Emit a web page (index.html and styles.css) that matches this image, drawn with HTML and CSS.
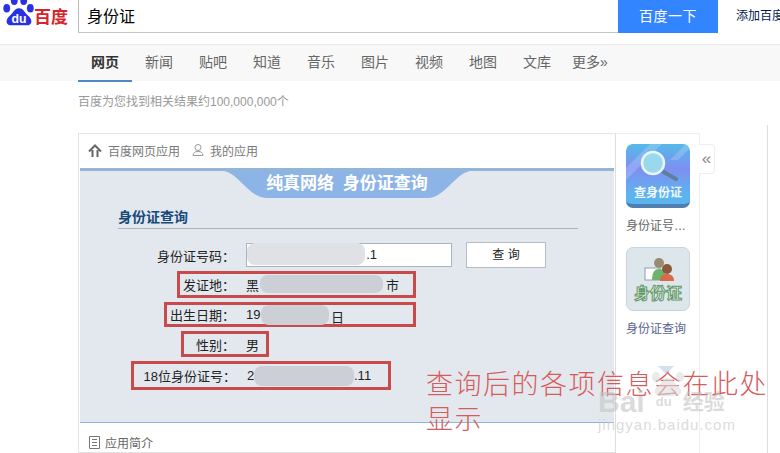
FILE: index.html
```html
<!DOCTYPE html>
<html lang="zh">

<head>
    <meta charset="utf-8">
    <title>身份证 百度搜索</title>
    <link rel="stylesheet" href="styles.css">
</head>

<body>
    <header class="topbar">
        <div class="logo">
            <svg class="paw" width="34" height="30" viewBox="0 0 36 30">
                <ellipse cx="5" cy="9" rx="3.600" ry="4.500" fill="#2932e1"/>
                <ellipse cx="13" cy="1" rx="3.600" ry="4.500" fill="#2932e1"/>
                <ellipse cx="23" cy="1" rx="3.600" ry="4.500" fill="#2932e1"/>
                <ellipse cx="30" cy="9" rx="3.600" ry="4.500" fill="#2932e1"/>
                <path d="M18 9c-5 0-6 5-10 8-4 3-5 10 2 10h16c7 0 6-7 2-10-4-3-5-8-10-8z" fill="#2932e1"/>
                <text x="18" y="25" class="du">du</text>
            </svg>
            <span class="logo-text">百度</span>
        </div>
        <div class="search">身份证</div>
        <div class="search-btn">百度一下</div>
        <div class="add-link">添加百度</div>
    </header>

    <nav class="tabs">
        <a class="valgt">网页</a>
        <a>新闻</a>
        <a>贴吧</a>
        <a>知道</a>
        <a>音乐</a>
        <a>图片</a>
        <a>视频</a>
        <a>地图</a>
        <a>文库</a>
        <a>更多»</a>
    </nav>

    <p class="count">百度为您找到相关结果约100,000,000个</p>

    <div class="result">
        <section class="card">
            <div class="crumbs">
                <svg width="14" height="13" viewBox="0 0 14 13" fill="none" stroke="#666" stroke-width="2"><path d="M1 7.500l6-6 6 6M4.500 6v7M9.500 6v7"/></svg>
                <span>百度网页应用</span>
                <svg class="user" width="12" height="12" viewBox="0 0 12 12" fill="none" stroke="#999"><circle cx="6" cy="3.500" r="3"/><path d="M1 11.500c0-3 2-4 5-4s5 1 5 4z"/></svg>
                <span>我的应用</span>
            </div>

            <div class="panel">
                <div class="banner">
                    <svg class="banner-bg" width="246" height="27" viewBox="0 0 246 27"><path d="M0 0C14 2 26 27 42 27H204C220 27 232 2 246 0z" fill="#8db4e6"/></svg>
                    <h1>纯真网络 身份证查询</h1>
                </div>
                <h2>身份证查询</h2>

                <div class="row row-query">
                    <span class="label">身份证号码：</span>
                    <span class="id-input">.1<i class="smudge smudge-a"></i></span>
                    <span class="query-btn">查 询</span>
                </div>
                <div class="row mark row-place">
                    <span class="label">发证地：</span>
                    <span class="value">黑<i class="smudge smudge-b"></i><b>市</b></span>
                </div>
                <div class="row mark row-birth">
                    <span class="label">出生日期：</span>
                    <span class="value">19<i class="smudge smudge-c"></i><b>日</b></span>
                </div>
                <div class="row mark row-sex">
                    <span class="label">性别：</span>
                    <span class="value">男</span>
                </div>
                <div class="row mark row-long">
                    <span class="label">18位身份证号：</span>
                    <span class="value">2<i class="smudge smudge-d"></i><b>.11</b></span>
                </div>
            </div>

            <div class="intro">
                <svg width="11" height="13" viewBox="0 0 11 13" fill="none" stroke="#777"><path d="M.5.500h10v12H.5zM3 3.500h5M3 6.500h5M3 9.500h5"/></svg>
                <span>应用简介</span>
            </div>
        </section>

        <aside class="apps">
            <div class="toggle">«</div>
            <div class="app">
                <div class="icon icon-search">
                    <svg width="64" height="44" viewBox="0 0 64 44">
                        <path d="M0 24L24 0h12L0 36zM44 16L60 0h4v4L52 16z" fill="#fff" opacity=".18"/>
                        <path d="M36 27l14 8" stroke="#5f7f9c" stroke-width="4" stroke-linecap="round"/>
                        <circle cx="27" cy="19" r="11" fill="#9ad8ee" stroke="#e8f6fb" stroke-width="2.500"/>
                    </svg>
                    <span>查身份证</span>
                </div>
                <p>身份证号…</p>
            </div>
            <div class="app">
                <div class="icon icon-card">
                    <svg width="62" height="36" viewBox="0 0 62 36">
                        <rect x="18" y="20" width="15" height="12" fill="#fff" stroke="#8aa0b0"/>
                        <circle cx="32" cy="15" r="5" fill="#9b8b6e"/>
                        <path d="M25 32c0-8 3-11 7-11s7 3 7 11z" fill="#6fb36a"/>
                        <circle cx="40" cy="21" r="5" fill="#8b5a3a"/>
                        <path d="M33 33c0-5 3-7 7-7s7 2 7 7z" fill="#d9694a"/>
                    </svg>
                    <span>身份证</span>
                </div>
                <p class="app-name">身份证查询</p>
            </div>
        </aside>
    </div>

    <div class="note">查询后的各项信息会在此处显示</div>
    <div class="watermark">
        <svg class="wm-paw" width="36" height="30" viewBox="0 0 36 30">
            <path d="M8 0h16l-8 8z" fill="#b9cbe6"/>
            <ellipse cx="6" cy="11" rx="4" ry="5" fill="#ddd"/>
            <ellipse cx="30" cy="11" rx="4" ry="5" fill="#ddd"/>
            <path d="M18 12c-5 0-6 5-10 8-4 3-5 10 2 10h16c7 0 6-7 2-10-4-3-5-8-10-8z" fill="#ddd"/>
        </svg>
        <span class="wm-main">Bai<i>du</i><em>经验</em></span>
        <span class="wm-url">jingyan.baidu.com</span>
    </div>
</body>

</html>
```
FILE: styles.css
```css
* {
    box-sizing: border-box;
    margin: 0;
    padding: 0;
}

html,
body {
    height: 453px;
    overflow: hidden;
}

body {
    position: relative;
    background: #fff;
    color: #222;
    font-family: "Liberation Sans", "Noto Sans CJK SC", sans-serif;
    font-size: 13px;
}

/* top search bar */
.topbar {
    display: flex;
    height: 33px;
}

.logo {
    display: flex;
    flex: none;
    width: 78px;
    align-items: flex-end;
    padding: 0 0 5px 2px;
    overflow: hidden;
}

.paw {
    flex: none;
    margin-bottom: -1px;
    overflow: visible;
}

.du {
    fill: #fff;
    font-size: 13px;
    font-weight: bold;
    text-anchor: middle;
}

.logo-text {
    margin-left: -2px;
    color: #d7232a;
    font-size: 17px;
    font-weight: bold;
    line-height: 20px;
}

.search {
    flex: none;
    width: 540px;
    border-left: 1px solid #bbb;
    border-bottom: 1px solid #c4c4c4;
    padding-left: 8px;
    color: #000;
    font-size: 16px;
    line-height: 33px;
}

.search-btn {
    flex: none;
    width: 100px;
    background: #3385ff;
    color: #fff;
    font-size: 14px;
    letter-spacing: .5px;
    line-height: 32px;
    text-align: center;
}

.add-link {
    flex: none;
    margin-left: 18px;
    color: #001a4d;
    font-size: 12px;
    line-height: 33px;
    white-space: nowrap;
}

/* tabs */
.tabs {
    display: flex;
    height: 37px;
    margin-top: 11px;
    border-top: 1px solid #e8e8e8;
    background: #f8f8f8;
    padding-left: 78px;
}

.tabs a {
    width: 54px;
    height: 37px;
    color: #666;
    font-size: 14px;
    line-height: 35px;
    text-align: center;
}

.tabs a:last-child {
    width: auto;
    margin-left: 8px;
}

.tabs .valgt {
    border-bottom: 2px solid #4e88c7;
    color: #333;
    font-weight: bold;
}

.count {
    margin: 12px 0 0 78px;
    color: #999;
    font-size: 12px;
    line-height: 18px;
}

/* result */
.result {
    display: flex;
    width: 690px;
    height: 328px;
    margin: 14px 0 0 78px;
    border-right: 1px solid #ddd;
    padding-top: 8px;
    align-items: flex-start;
}

.card {
    width: 538px;
    height: 320px;
    border: 1px solid #e4e4e4;
    border-right-color: #ddd;
}

.crumbs {
    display: flex;
    height: 34px;
    align-items: center;
    padding: 0 0 2px 9px;
    color: #777;
    font-size: 12px;
}

.crumbs span {
    margin-left: 6px;
}

.crumbs .user {
    margin-left: 12px;
}

.panel {
    height: 255px;
    margin: 0 1px;
    border-top: 3px solid #94b6d6;
    border-bottom: 1px solid #94b6d6;
    background: #e3e8ee;
    color: #222;
}

.banner {
    position: relative;
    height: 27px;
}

.banner-bg {
    display: block;
    margin-left: 144px;
}

.banner h1 {
    position: absolute;
    top: 0;
    left: 0;
    width: 534px;
    color: #fff;
    font-size: 17px;
    line-height: 26px;
    text-align: center;
    word-spacing: 4px;
}

.panel h2 {
    width: 460px;
    height: 31px;
    margin-left: 38px;
    border-bottom: 1px solid #a9b4c0;
    color: #164a7a;
    font-size: 14px;
    line-height: 39px;
}

.row {
    display: flex;
    align-items: center;
    font-size: 13px;
}

.label {
    flex: none;
    text-align: right;
    white-space: nowrap;
}

.value {
    position: relative;
    display: flex;
    flex: 1;
    margin-left: 11px;
}

.row-query {
    height: 26px;
    margin: 13px 0 3px 0;
}

.row-query .label {
    width: 155px;
}

.id-input {
    position: relative;
    width: 206px;
    height: 24px;
    margin-left: 11px;
    border: 1px solid #a9b4c0;
    background: #fff;
    padding-right: 74px;
    line-height: 22px;
    text-align: right;
}

.query-btn {
    width: 80px;
    height: 26px;
    margin-left: 14px;
    border: 1px solid #b5bcc4;
    background: #fff;
    font-size: 12px;
    line-height: 24px;
    text-align: center;
}

.mark {
    margin-bottom: 4px;
    border: 3px solid #c94a4a;
}

.row-place {
    width: 239px;
    height: 27px;
    margin-left: 97px;
}

.row-place .label {
    width: 55px;
}

.row-birth {
    width: 252px;
    height: 25px;
    margin-left: 84px;
}

.row-birth .label {
    width: 68px;
}

.row-sex {
    width: 88px;
    height: 26px;
    margin-left: 101px;
}

.row-sex .label {
    width: 51px;
}

.row-long {
    width: 260px;
    height: 29px;
    margin-left: 51px;
}

.row-long .label {
    width: 102px;
}

.value b {
    position: absolute;
    font-weight: normal;
}

.row-place b {
    left: 140px;
}

.row-birth b {
    left: 85px;
}

.row-long b {
    left: 107px;
}

.smudge {
    position: absolute;
    border-radius: 8px;
    background: #ccd0d6;
}

.smudge-a {
    top: -1px;
    left: 0;
    width: 118px;
    height: 22px;
    background: #dfe1e5;
}

.smudge-b {
    top: 0;
    left: 14px;
    width: 123px;
    height: 18px;
}

.smudge-c {
    top: -2px;
    left: 15px;
    width: 68px;
    height: 20px;
}

.smudge-d {
    top: -2px;
    left: 7px;
    width: 100px;
    height: 20px;
}

/* right column */
.apps {
    position: relative;
    width: 84px;
    height: 320px;
    border-top: 1px solid #eee;
    border-right: 1px solid #eee;
}

.toggle {
    position: absolute;
    top: 10px;
    left: 83px;
    width: 16px;
    height: 30px;
    border: 1px solid #eee;
    border-left: 0;
    border-radius: 0 4px 4px 0;
    background: #fff;
    color: #888;
    font-size: 17px;
    line-height: 27px;
    text-align: center;
}

.app {
    height: 103px;
    padding: 10px 0 0 10px;
}

.app p {
    margin-top: 9px;
    color: #666;
    font-size: 12px;
    line-height: 18px;
    white-space: nowrap;
}

.app .app-name {
    color: #5a5f94;
}

.icon {
    display: flex;
    flex-direction: column;
    width: 64px;
    height: 64px;
    border-radius: 7px;
    align-items: center;
    overflow: hidden;
}

.icon svg {
    flex: none;
}

.icon-search {
    border-bottom: 4px solid #4f7fb0;
    background: linear-gradient(#56b9e8, #7e8ff2 42%, #5bb4ee 85%);
}

.icon-search span {
    margin-top: -3px;
    color: #eef8ff;
    font-size: 12px;
    font-weight: bold;
    line-height: 16px;
}

.icon-card {
    border: 1px solid #c5d5e2;
    background: #dde6ea;
}

.icon-card span {
    color: #e9f5e6;
    font-size: 16px;
    font-weight: bold;
    line-height: 20px;
    -webkit-text-stroke: 1px #5f9668;
}

.intro {
    display: flex;
    height: 38px;
    align-items: center;
    padding-left: 10px;
    color: #666;
    font-size: 12px;
}

.intro span {
    margin-left: 5px;
}

/* over the screenshot */
.note {
    position: absolute;
    top: 368px;
    left: 426px;
    width: 346px;
    color: #d65c5c;
    font-size: 27px;
    font-weight: 300;
    letter-spacing: 1.500px;
    line-height: 35px;
}

.watermark {
    position: absolute;
    top: 366px;
    left: 598px;
    display: flex;
    width: 140px;
    flex-direction: column;
    color: rgba(195, 195, 195, .6);
    white-space: nowrap;
}

.wm-paw {
    margin-left: 52px;
    opacity: .6;
}

.wm-main {
    display: flex;
    height: 28px;
    margin-top: -8px;
    align-items: center;
    font-size: 30px;
    font-weight: bold;
    line-height: 28px;
}

.wm-main i {
    width: 38px;
    font-size: 13px;
    font-style: normal;
    text-align: center;
}

.wm-main em {
    font-size: 21px;
    font-style: normal;
}

.wm-url {
    font-size: 15px;
    letter-spacing: 1px;
    line-height: 18px;
}
```
